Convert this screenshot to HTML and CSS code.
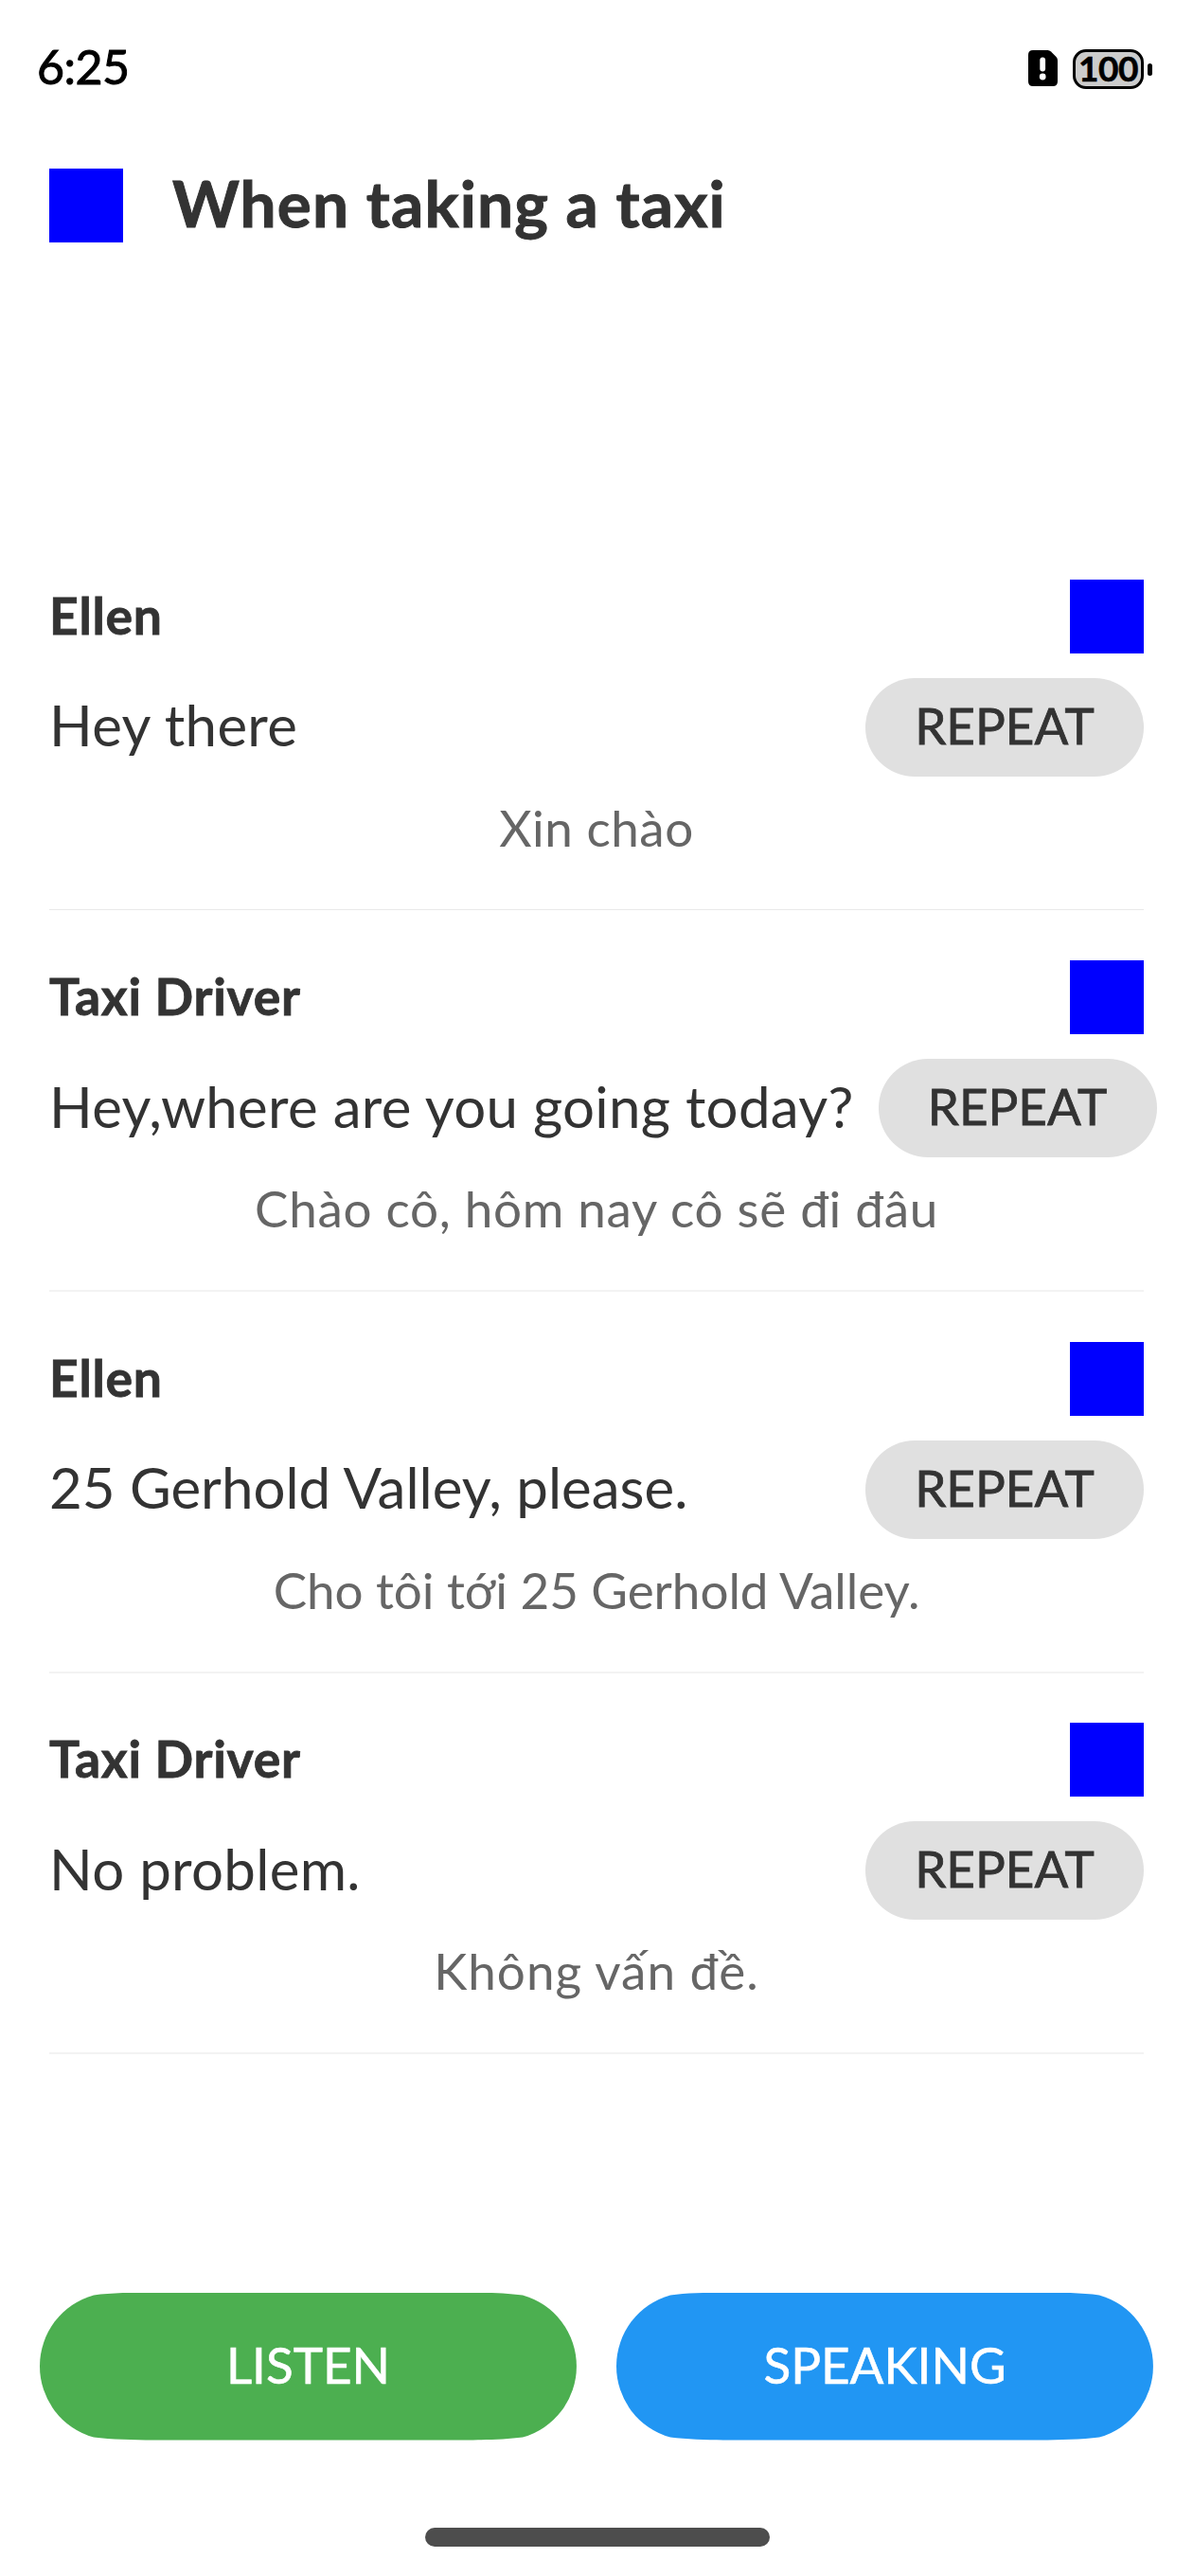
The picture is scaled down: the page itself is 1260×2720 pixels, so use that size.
FILE: index.html
```html
<!DOCTYPE html>
<html lang="en">
<head>
<meta charset="utf-8">
<title>When taking a taxi</title>
<link rel="stylesheet" href="styles.css">
</head>
<body>
<div class="screen">
  <div class="status">
    <span class="clock">6:25</span>
    <div class="status-icons">
      <svg class="sim" viewBox="0 0 31 38" width="31" height="38">
        <path fill="#000" d="M5 0H20.500Q22.500 0 24 1.500L29.500 7Q31 8.500 31 10.500V33Q31 38 26 38H5Q0 38 0 33V5Q0 0 5 0Z"/>
        <rect x="12.300" y="7.500" width="5.800" height="15" rx="2.900" fill="#fff"/>
        <circle cx="15.200" cy="28" r="3.400" fill="#fff"/>
      </svg>
      <div class="battery"><span class="level">100</span></div>
      <span class="tip"></span>
    </div>
  </div>

  <header class="header">
    <span class="square"></span>
    <h1 class="title">When taking a taxi</h1>
  </header>

  <main class="dialog">
    <section class="item">
      <div class="row speaker"><h2 class="name">Ellen</h2><span class="square"></span></div>
      <div class="row"><p class="line">Hey there</p><button class="repeat">REPEAT</button></div>
      <p class="translation">Xin chào</p>
      <div class="divider"></div>
    </section>
    <section class="item">
      <div class="row speaker"><h2 class="name">Taxi Driver</h2><span class="square"></span></div>
      <div class="row"><p class="line">Hey,where are you going today?</p><button class="repeat">REPEAT</button></div>
      <p class="translation wide">Chào cô, hôm nay cô sẽ đi đâu</p>
      <div class="divider"></div>
    </section>
    <section class="item">
      <div class="row speaker"><h2 class="name">Ellen</h2><span class="square"></span></div>
      <div class="row"><p class="line tight">25 Gerhold Valley, please.</p><button class="repeat">REPEAT</button></div>
      <p class="translation tight">Cho tôi tới 25 Gerhold Valley.</p>
      <div class="divider"></div>
    </section>
    <section class="item">
      <div class="row speaker"><h2 class="name">Taxi Driver</h2><span class="square"></span></div>
      <div class="row"><p class="line">No problem.</p><button class="repeat">REPEAT</button></div>
      <p class="translation widest">Không vấn đề.</p>
      <div class="divider"></div>
    </section>
  </main>

  <footer class="actions">
    <button class="action listen">LISTEN</button>
    <button class="action speaking">SPEAKING</button>
  </footer>
  <div class="home-bar"></div>
</div>
</body>
</html>
```
FILE: styles.css
```css
* { box-sizing: border-box; }

body {
  margin: 0;
  background: #fff;
  color: #333;
  font-family: Lato, "Noto Sans", sans-serif;
}

h1, h2, p { margin: 0; white-space: nowrap; }

button {
  border: 0;
  margin: 0;
  font-family: inherit;
  font-size: 53px;
  font-weight: 400;
}

.screen {
  display: flex;
  flex-direction: column;
  width: 1260px;
  height: 2720px;
  overflow: hidden;
}

/* status bar */
.status {
  display: flex;
  align-items: center;
  justify-content: space-between;
  height: 146px;
  padding: 0 43px 0 39px;
  color: #000;
}
.clock {
  font-size: 50px;
  line-height: 60px;
  padding-bottom: 7px;
  letter-spacing: -0.5px;
  -webkit-text-stroke: 1px #000;
}
.status-icons { display: flex; align-items: center; }
.sim { margin: 0 16px 2px 0; }
.battery {
  display: flex;
  align-items: center;
  justify-content: center;
  width: 75px;
  height: 42px;
  border: 3px solid #000;
  border-radius: 14px;
  background: #ccc;
}
.level {
  font-size: 37px;
  font-weight: 700;
  line-height: 36px;
  padding-bottom: 3px;
  letter-spacing: -0.5px;
  -webkit-text-stroke: 0.6px #000;
}
.tip {
  width: 5px;
  height: 13px;
  margin-left: 4px;
  border-radius: 3px;
  background: #000;
}

/* header */
.square {
  flex: none;
  width: 78px;
  height: 78px;
  background: #00f;
}
.header {
  display: flex;
  align-items: center;
  height: 142px;
  padding: 0 52px;
  gap: 52px;
}
.title {
  font-size: 67.5px;
  line-height: 80px;
  padding-bottom: 7px;
  letter-spacing: 1.15px;
  -webkit-text-stroke: 1px #333;
}

/* dialog */
.dialog { padding: 271.5px 52px 0; }
.item { height: 402.5px; padding-top: 52px; }
.row {
  display: flex;
  align-items: center;
  justify-content: space-between;
  gap: 26px;
  height: 104px;
  margin-bottom: 26px;
}
.speaker { height: 78px; }
.name {
  font-size: 53.5px;
  line-height: 60px;
  padding-bottom: 4px;
  letter-spacing: 0.75px;
  -webkit-text-stroke: 0.8px #333;
}
.line {
  flex: none;
  font-size: 60px;
  line-height: 72px;
  padding-bottom: 5px;
  letter-spacing: 0.3px;
}
.line.tight { letter-spacing: 0; }
.repeat {
  flex: none;
  width: 294px;
  height: 104px;
  padding: 0 0 5px;
  border-radius: 52px;
  background: #e0e0e0;
  color: #333;
  -webkit-text-stroke: 0.8px #333;
}
.translation {
  height: 61px;
  font-size: 53px;
  line-height: 56px;
  text-align: center;
  letter-spacing: 0.5px;
  color: #666;
}
.translation.wide { letter-spacing: 0.7px; }
.translation.tight { letter-spacing: -0.05px; }
.translation.widest { letter-spacing: 1px; }
.divider {
  height: 2px;
  margin-top: 53px;
  background: #f3f3f3;
}
.item:first-child .divider { height: 1px; background: #e9e9e9; }

/* bottom buttons */
.actions {
  display: flex;
  gap: 42px;
  margin-top: 251px;
  padding: 0 42px;
}
.action {
  width: 567px;
  height: 156px;
  padding: 0 0 5px;
  color: #fff;
  -webkit-text-stroke: 0.6px #fff;
  /* smooth-cornered pill */
  clip-path: path("M0 78A78 78 0 0 1 57 2.900C75 .5 100 0 119 0H448C467 0 492 .5 510 2.900A78 78 0 0 1 510 153.100C492 155.500 467 156 448 156H119C100 156 75 155.500 57 153.100A78 78 0 0 1 0 78Z");
}
.listen { background: #4caf50; }
.speaking { background: #2196f3; }

.home-bar {
  width: 364px;
  height: 20px;
  margin: 92px 447px 0 449px;
  border-radius: 10px;
  background: #4d4d4d;
}
```
